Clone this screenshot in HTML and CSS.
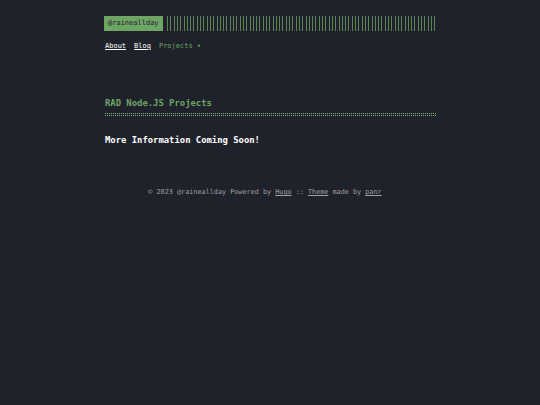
FILE: index.html
```html
<!DOCTYPE html>
<html lang="en">
<head>
<meta charset="utf-8">
<title>RAD Node.JS Projects</title>
<link rel="stylesheet" href="styles.css">
</head>
<body>
<div class="container">
  <header class="header">
    <div class="header-top">
      <a class="logo" href="#">@raineallday</a>
      <div class="stripes"></div>
    </div>
    <nav class="menu">
      <a class="menu-link" href="#">About</a>
      <a class="menu-link" href="#">Blog</a>
      <span class="menu-more">Projects &#9662;</span>
    </nav>
  </header>
  <main class="content">
    <h1 class="title">RAD Node.JS Projects</h1>
    <div class="dots"></div>
    <p class="lead">More Information Coming Soon!</p>
  </main>
  <footer class="footer">
    <span>&copy; 2023 @raineallday Powered by <a href="#">Hugo</a> :: <a href="#">Theme</a> made by <a href="#">panr</a></span>
  </footer>
</div>
</body>
</html>
```

FILE: styles.css
```css
html, body {
  margin: 0;
  padding: 0;
  background: #1f222a;
  height: 100%;
}
body {
  font-family: "DejaVu Sans Mono", monospace;
  color: #ffffff;
}
.container {
  width: 332px;
  margin: 0 auto;
  padding-top: 16px;
}
.header-top {
  display: flex;
  align-items: stretch;
  gap: 4px;
}
.logo {
  background: #6ea565;
  color: #1f222a;
  font-size: 7px;
  line-height: 15px;
  height: 15px;
  padding: 0 4px;
  text-decoration: none;
  white-space: nowrap;
}
.stripes {
  flex: 1;
  height: 15px;
  background: repeating-linear-gradient(90deg, #6ea565 0, #6ea565 1px, transparent 1px, transparent 3.3px);
  opacity: 0.75;
}
.menu {
  display: flex;
  gap: 8px;
  margin-top: 10px;
  padding-left: 1px;
  font-size: 7px;
  line-height: 10px;
}
.menu-link {
  color: #ffffff;
  text-decoration: underline;
}
.menu-more {
  color: #6ea565;
}
.content {
  margin-top: 46px;
  padding-left: 1px;
}
.title {
  margin: 0;
  font-size: 8.9px;
  line-height: 12px;
  color: #6ea565;
  font-weight: bold;
}
.dots {
  margin-top: 4px;
  height: 3px;
  background:
    repeating-linear-gradient(90deg, #7ab56f 0, #7ab56f 1px, transparent 1px, transparent 2px);
  -webkit-mask: repeating-linear-gradient(180deg, #000 0, #000 1px, transparent 1px, transparent 2px);
  mask: repeating-linear-gradient(180deg, #000 0, #000 1px, transparent 1px, transparent 2px);
}
.lead {
  margin: 18px 0 0;
  font-size: 8.9px;
  line-height: 12px;
  font-weight: bold;
  color: #ffffff;
}
.footer {
  margin-top: 41px;
  padding-right: 10px;
  text-align: center;
  font-size: 6.8px;
  line-height: 10px;
  color: #9fa1a6;
}
.footer a {
  color: #9fa1a6;
  text-decoration: underline;
}
```
